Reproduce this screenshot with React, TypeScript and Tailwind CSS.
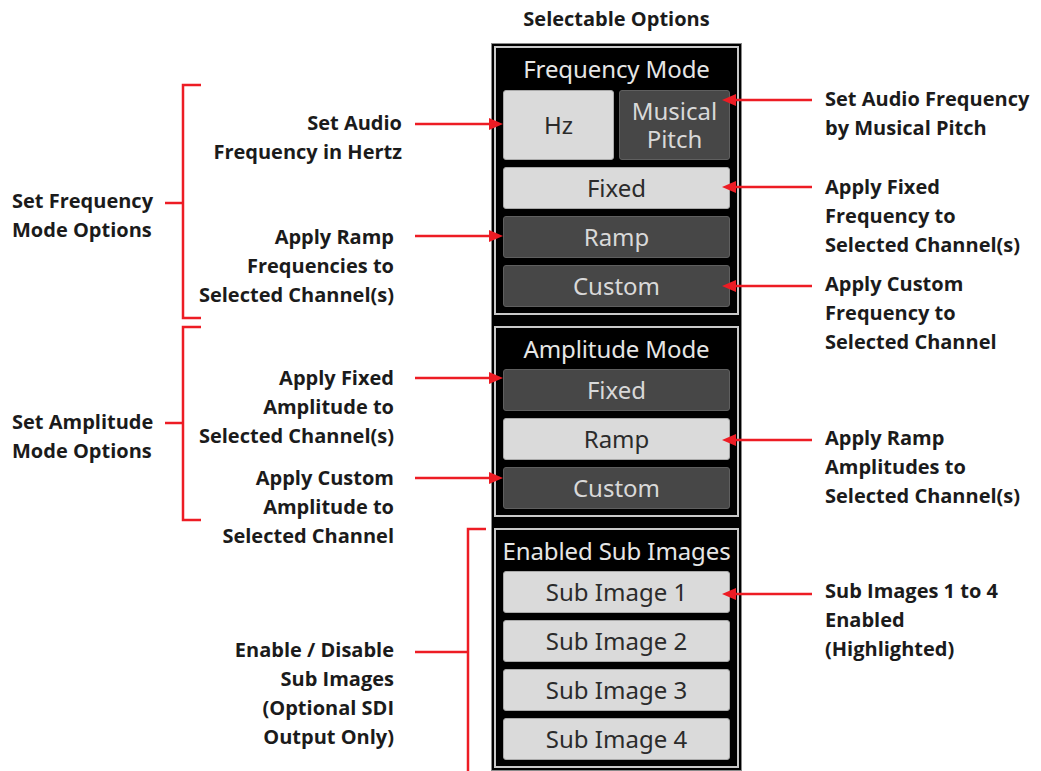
import React from 'react';

const RED = '#ed1c24';

type Tone = 'light' | 'dark';

const PanelButton: React.FC<{ tone: Tone; className?: string; children: React.ReactNode }> = ({ tone, className = 'h-[42px]', children }) => (
  <div
    className={`${className} flex flex-col items-center justify-center rounded-[3px] border text-center text-[24px] leading-[28px] ${
      tone === 'light'
        ? 'bg-[#dadada] border-[#a9a9a9] text-[#2b2b2b]'
        : 'bg-[#474747] border-[#5f5f5f] text-[#d9d9d9]'
    }`}
  >
    {children}
  </div>
);

const Panel: React.FC<{ title: string; titleClass: string; children: React.ReactNode }> = ({ title, titleClass, children }) => (
  <section className="border-2 border-[#c9c9c9] bg-black px-[7px] pb-[6px]">
    <div className={`${titleClass} flex items-center justify-center whitespace-nowrap text-[24px] tracking-[-0.1px] text-[#e6e6e6]`}>
      {title}
    </div>
    <div className="flex flex-col gap-[7px]">{children}</div>
  </section>
);

// callout text, one line per entry
const Note: React.FC<{ lines: string[]; className: string }> = ({ lines, className }) => (
  <div className={`absolute text-[20px] leading-[29px] font-bold text-[#1b1b1b] whitespace-nowrap ${className}`}>
    {lines.map((l) => (
      <div key={l}>{l}</div>
    ))}
  </div>
);

const ArrowRight: React.FC<{ y: number }> = ({ y }) => (
  <g>
    <line x1={415} y1={y} x2={492} y2={y} stroke={RED} strokeWidth={2.5} />
    <polygon points={`489,${y - 6} 503,${y} 489,${y + 6}`} fill={RED} />
  </g>
);

const ArrowLeft: React.FC<{ y: number }> = ({ y }) => (
  <g>
    <line x1={733} y1={y} x2={812} y2={y} stroke={RED} strokeWidth={2.5} />
    <polygon points={`736,${y - 6} 722,${y} 736,${y + 6}`} fill={RED} />
  </g>
);

export default function App() {
  return (
    <div className="relative h-[771px] w-[1041px] overflow-hidden bg-white font-['Open_Sans',sans-serif]">
      <div className="ml-[491px] flex w-[251px] flex-col">
        <div className="flex h-[43px] items-start justify-center pt-[4px] text-[20px] font-bold text-[#1b1b1b] whitespace-nowrap">
          Selectable Options
        </div>
        <div className="flex flex-col gap-[11px] border border-[#8a8a8a] bg-black p-[2px] font-['Noto_Sans',sans-serif]">
          <Panel title="Frequency Mode" titleClass="h-[42px]">
            <div className="grid grid-cols-2 gap-[5px]">
              <PanelButton tone="light" className="h-[70px]">Hz</PanelButton>
              <PanelButton tone="dark" className="h-[70px]">
                <span>Musical</span>
                <span>Pitch</span>
              </PanelButton>
            </div>
            <PanelButton tone="light">Fixed</PanelButton>
            <PanelButton tone="dark">Ramp</PanelButton>
            <PanelButton tone="dark">Custom</PanelButton>
          </Panel>
          <Panel title="Amplitude Mode" titleClass="h-[41px]">
            <PanelButton tone="dark">Fixed</PanelButton>
            <PanelButton tone="light">Ramp</PanelButton>
            <PanelButton tone="dark">Custom</PanelButton>
          </Panel>
          <Panel title="Enabled Sub Images" titleClass="h-[41px]">
            <PanelButton tone="light">Sub Image 1</PanelButton>
            <PanelButton tone="light">Sub Image 2</PanelButton>
            <PanelButton tone="light">Sub Image 3</PanelButton>
            <PanelButton tone="light">Sub Image 4</PanelButton>
          </Panel>
        </div>
      </div>

      {/* left-hand group labels */}
      <Note className="left-[12px] top-[186px]" lines={['Set Frequency', 'Mode Options']} />
      <Note className="left-[12px] top-[407px]" lines={['Set Amplitude', 'Mode Options']} />

      {/* left callouts */}
      <Note className="right-[639px] top-[108px] text-right" lines={['Set Audio', 'Frequency in Hertz']} />
      <Note className="right-[647px] top-[222px] text-right" lines={['Apply Ramp', 'Frequencies to', 'Selected Channel(s)']} />
      <Note className="right-[647px] top-[363px] text-right" lines={['Apply Fixed', 'Amplitude to', 'Selected Channel(s)']} />
      <Note className="right-[647px] top-[463px] text-right" lines={['Apply Custom', 'Amplitude to', 'Selected Channel']} />
      <Note
        className="right-[647px] top-[635px] text-right"
        lines={['Enable / Disable', 'Sub Images', '(Optional SDI', 'Output Only)']}
      />

      {/* right callouts */}
      <Note className="left-[825px] top-[84px]" lines={['Set Audio Frequency', 'by Musical Pitch']} />
      <Note className="left-[825px] top-[172px]" lines={['Apply Fixed', 'Frequency to', 'Selected Channel(s)']} />
      <Note className="left-[825px] top-[269px]" lines={['Apply Custom', 'Frequency to', 'Selected Channel']} />
      <Note className="left-[825px] top-[423px]" lines={['Apply Ramp', 'Amplitudes to', 'Selected Channel(s)']} />
      <Note className="left-[825px] top-[576px]" lines={['Sub Images 1 to 4', 'Enabled', '(Highlighted)']} />

      <svg className="pointer-events-none absolute inset-0" width={1041} height={771} viewBox="0 0 1041 771">
        <g fill="none" stroke={RED} strokeWidth={2.5}>
          <path d="M201 85 H183 V318 H201" />
          <path d="M165 203 H183" />
          <path d="M201 327 H183 V520 H201" />
          <path d="M165 423 H183" />
          <path d="M486 529 H468 V771" />
          <path d="M415 652 H468" />
        </g>
        <ArrowRight y={124} />
        <ArrowRight y={236} />
        <ArrowRight y={378} />
        <ArrowRight y={478} />
        <ArrowLeft y={100} />
        <ArrowLeft y={187} />
        <ArrowLeft y={286} />
        <ArrowLeft y={440} />
        <ArrowLeft y={594} />
      </svg>
    </div>
  );
}
